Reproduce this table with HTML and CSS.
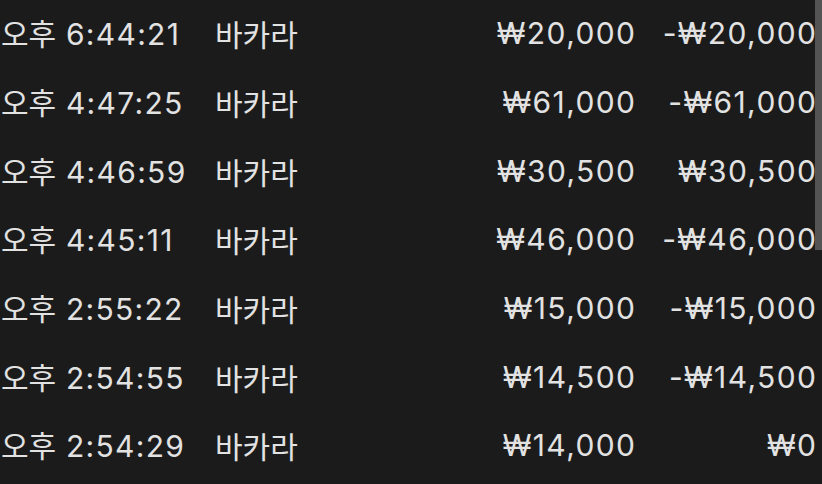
FILE: index.html
```html
<!DOCTYPE html>
<html lang="ko">
<head>
<meta charset="utf-8">
<link rel="stylesheet" href="styles.css">
</head>
<body>
<div class="list">
  <div class="row"><span class="time"><span class="ko">오후</span> 6:44:21</span><span class="game">바카라</span><span class="amt">₩20,000</span><span class="res">-₩20,000</span></div>
  <div class="row"><span class="time"><span class="ko">오후</span> 4:47:25</span><span class="game">바카라</span><span class="amt">₩61,000</span><span class="res">-₩61,000</span></div>
  <div class="row"><span class="time"><span class="ko">오후</span> 4:46:59</span><span class="game">바카라</span><span class="amt">₩30,500</span><span class="res">₩30,500</span></div>
  <div class="row"><span class="time"><span class="ko">오후</span> 4:45:11</span><span class="game">바카라</span><span class="amt">₩46,000</span><span class="res">-₩46,000</span></div>
  <div class="row"><span class="time"><span class="ko">오후</span> 2:55:22</span><span class="game">바카라</span><span class="amt">₩15,000</span><span class="res">-₩15,000</span></div>
  <div class="row"><span class="time"><span class="ko">오후</span> 2:54:55</span><span class="game">바카라</span><span class="amt">₩14,500</span><span class="res">-₩14,500</span></div>
  <div class="row"><span class="time"><span class="ko">오후</span> 2:54:29</span><span class="game">바카라</span><span class="amt">₩14,000</span><span class="res">₩0</span></div>
</div>
<div class="scrollbar"></div>
</body>
</html>
```
FILE: styles.css
```css
html, body {
  margin: 0;
  padding: 0;
  background: #1b1b1b;
  width: 822px;
  height: 484px;
  overflow: hidden;
}
body {
  position: relative;
  font-family: Inter, "Noto Sans CJK KR", sans-serif;
  color: #e2e2e2;
  font-size: 30px;
}
.list {
  display: flex;
  flex-direction: column;
}
.row {
  display: grid;
  grid-template-columns: 215px 200px 220px 181px;
  height: 68.67px;
  align-items: center;
  line-height: 1;
  padding-bottom: 2px;
  box-sizing: border-box;
}
.time { padding-left: 1px; letter-spacing: 1.3px; }
.ko, .game {
  font-family: "Noto Sans CJK KR", sans-serif;
  letter-spacing: 0;
}
.amt, .res { text-align: right; letter-spacing: 1.4px; margin-right: -1.4px; }
.scrollbar {
  position: absolute;
  right: 0;
  top: 0;
  width: 7px;
  height: 250px;
  background: #545454;
}
```
